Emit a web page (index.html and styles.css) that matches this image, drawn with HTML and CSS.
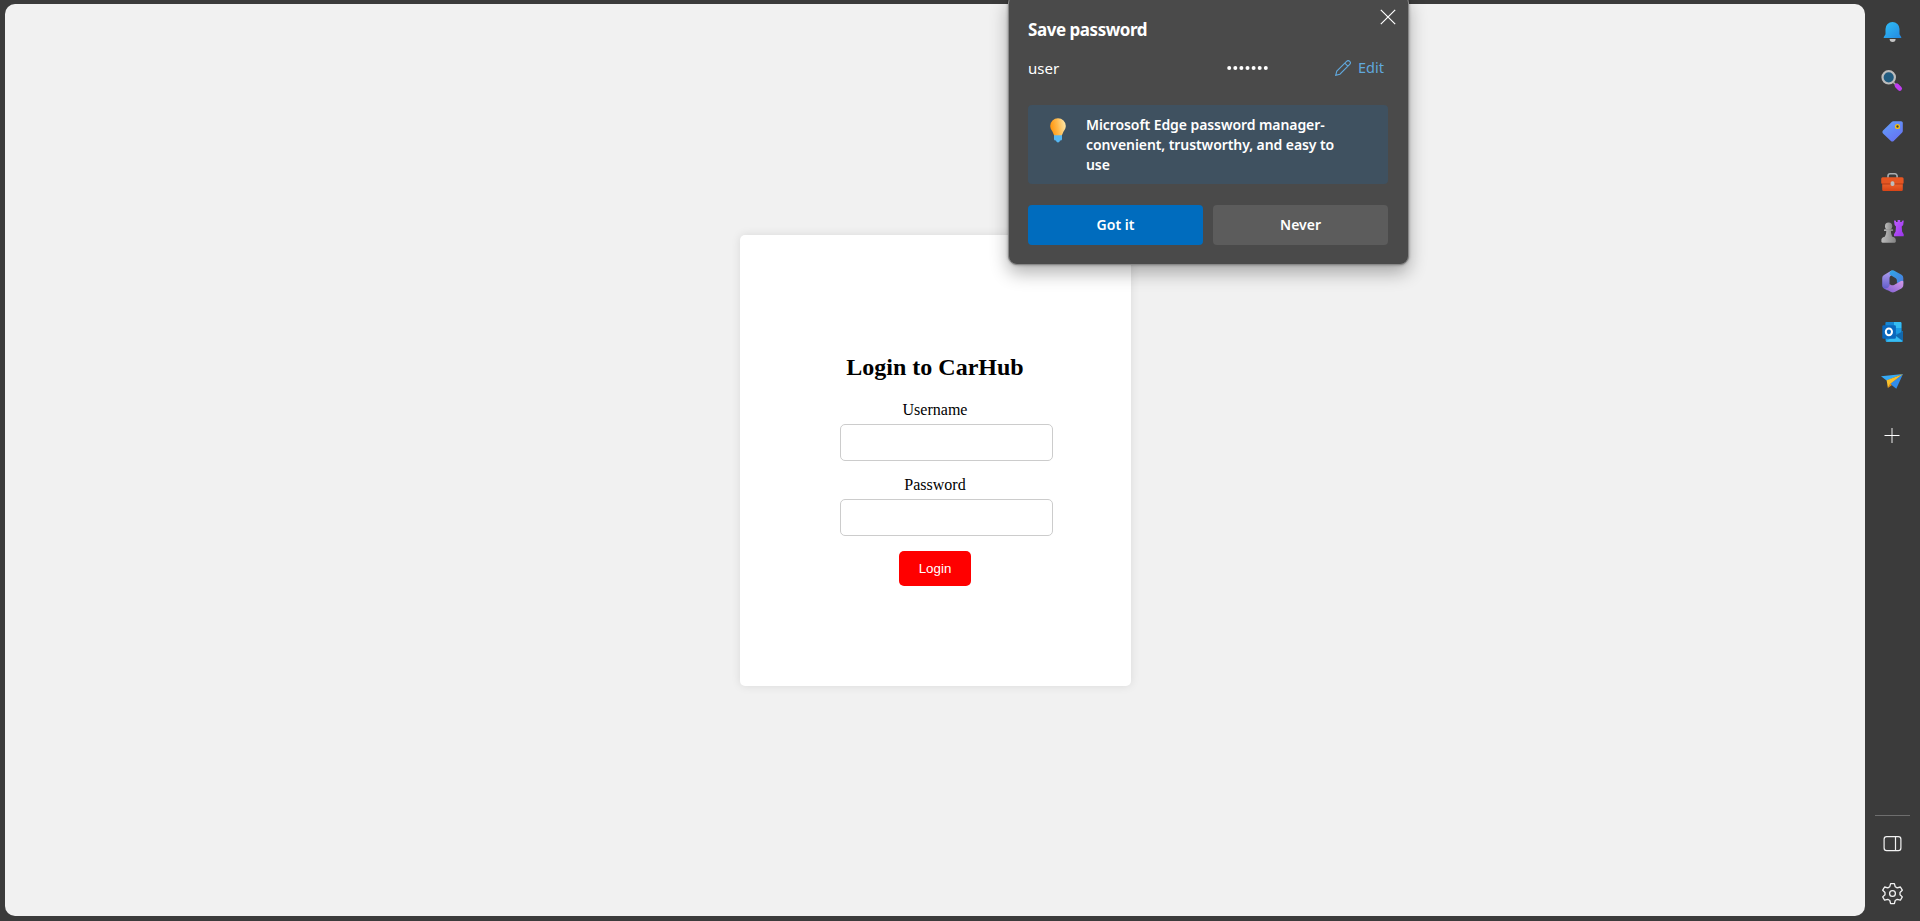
FILE: index.html
```html
<!DOCTYPE html>
<html lang="en">
<head>
<meta charset="utf-8">
<title>CarHub</title>
<link rel="stylesheet" href="styles.css">
</head>
<body>
<div class="browser">
  <main class="page">
    <form class="card">
      <h2 class="card-title">Login to CarHub</h2>
      <label class="label" for="username">Username</label>
      <input class="field" id="username" type="text">
      <label class="label" for="password">Password</label>
      <input class="field" id="password" type="password">
      <button class="login" type="button">Login</button>
    </form>
  </main>

  <nav class="sidebar">
    <svg class="tool" viewBox="0 0 55 50">
      <defs><linearGradient id="bell" x1="0" y1="0" x2="1" y2="1"><stop offset="0" stop-color="#2fc0f8"/><stop offset="1" stop-color="#2588e0"/></linearGradient></defs>
      <path d="M24.6 32h6a3 3 0 0 1-6 0z" fill="#c4c4c4"/>
      <path d="M27.5 15a7 7 0 0 0-7 7v5.3l-1.7 2.6c-.4.6 0 1.1.6 1.1h16.2c.6 0 1-.5.6-1.1l-1.7-2.6V22a7 7 0 0 0-7-7z" fill="url(#bell)"/>
    </svg>
    <svg class="tool" viewBox="0 0 55 50">
      <path d="M28.5 25.500l2.500 2.500" stroke="#aaa" stroke-width="1.6"/>
      <path d="M31.8 28.600l3 3" stroke="#c03df0" stroke-width="4.400" stroke-linecap="round"/>
      <circle cx="23.7" cy="20.3" r="6.2" fill="#225c80" stroke="#bcbcbc" stroke-width="2.2"/>
    </svg>
    <svg class="tool" viewBox="0 0 55 50">
      <defs><linearGradient id="tag" x1="0" y1="0" x2=".7" y2="1"><stop offset="0" stop-color="#62a2fa"/><stop offset="1" stop-color="#6672f2"/></linearGradient></defs>
      <path d="M28.3 14.3h7.8c1 0 1.7.7 1.7 1.7v8c0 .6-.2 1.1-.6 1.5l-8.5 8.4c-.8.8-2 .8-2.8 0L18 26.4c-.8-.8-.8-2 0-2.8l8.7-8.7c.4-.4 1-.6 1.6-.6z" fill="url(#tag)"/>
      <circle cx="32.5" cy="19.5" r="1.9" fill="#403d38" stroke="#f5c116" stroke-width="1.4"/>
    </svg>
    <svg class="tool" viewBox="0 0 55 50">
      <defs><linearGradient id="box" x1="0" y1="0" x2="0" y2="1"><stop offset="0" stop-color="#f26a31"/><stop offset="1" stop-color="#d94416"/></linearGradient></defs>
      <path d="M23 21v-2a2.2 2.2 0 0 1 2.2-2.2h4.7a2.2 2.2 0 0 1 2.2 2.2v2" fill="none" stroke="#a9adb0" stroke-width="1.6"/>
      <path d="M17.2 25h20.6v7.7a1.3 1.3 0 0 1-1.3 1.3h-18a1.3 1.3 0 0 1-1.3-1.3z" fill="url(#box)"/>
      <rect x="16.2" y="20.3" width="22.4" height="6.6" rx="1.5" fill="#e65622"/>
      <path d="M17 27h21" stroke="#a93413" stroke-width=".8"/>
      <rect x="25.6" y="24.3" width="3.8" height="4.6" rx="1.6" fill="#bdbdbd"/>
    </svg>
    <svg class="tool" viewBox="0 0 55 50">
      <defs>
        <linearGradient id="rook" x1="0" y1="0" x2="1" y2="1"><stop offset="0" stop-color="#bf5cff"/><stop offset="1" stop-color="#9a35ea"/></linearGradient>
        <linearGradient id="pawn"><stop offset="0" stop-color="#bcbcbc"/><stop offset="1" stop-color="#848484"/></linearGradient>
      </defs>
      <path d="M29 13.600l2 .1v1.300h1.600V13h2.600v2h1.600v-1.300l2-.1-.6 4.500-1.500 1.300.4 5.200 1.600 2.600v2.100h-9.700v-2.100l1.600-2.600.4-5.200-1.400-1.300z" fill="url(#rook)"/>
      <circle cx="23.600" cy="19.200" r="3.600" fill="url(#pawn)"/>
      <path d="M19.800 22.300h7.600c.6 0 .8.4.8.9s-.3.900-.8.900h-1.500c.1 2.800.8 4.800 1.900 6H19.400c1.100-1.200 1.800-3.200 1.900-6h-1.500c-.6 0-.8-.4-.8-.9s.3-.900.8-.900z" fill="url(#pawn)"/>
      <path d="M18.800 30.100h9.600c1.600.6 2.400 1.700 2.400 3v1.400c0 .7-.4 1.200-1.200 1.200h-12c-.8 0-1.200-.5-1.200-1.200v-1.400c0-1.300.8-2.400 2.400-3z" fill="url(#pawn)"/>
    </svg>
    <svg class="tool" viewBox="0 0 55 50">
      <defs>
        <linearGradient id="m1" x1="0" y1="0" x2="1" y2="1"><stop offset="0" stop-color="#30a8e8"/><stop offset="1" stop-color="#4b77dc"/></linearGradient>
        <linearGradient id="m2" x1="0" y1="1" x2="1" y2="0"><stop offset="0" stop-color="#7a5bd0"/><stop offset="1" stop-color="#d79be8"/></linearGradient>
        <linearGradient id="m3" x1="0" y1="0" x2="0" y2="1"><stop offset="0" stop-color="#b3a0ee"/><stop offset="1" stop-color="#5957c6"/></linearGradient>
      </defs>
      <path d="M26.500 13.500L19 17.900a3.600 3.600 0 0 0-1.800 3.100v7.600c0 1.400.7 2.500 1.900 3.100l2.900 1.500c1.500.4 2.500-.8 2.500-2.500v-9.500c0-1.200.6-2.200 1.600-2.800l2.200-1.400z" fill="url(#m3)"/>
      <path d="M26.200 13.700c1.300-.6 2.500-.4 3.500.2l6.800 3.900a3.600 3.600 0 0 1 1.800 3.100v5.600c0 1.300-1 1.900-2.100 1.300l-4.300-2.400v-1.700c0-1.200-.5-2.100-1.500-2.700l-5.900-3.500c.1-1.700.3-3 1.700-3.800z" fill="url(#m1)"/>
      <path d="M38.300 24.500v3.800c0 1.400-.7 2.500-1.900 3.100l-6.700 3.600c-1.300.6-2.600.5-3.700-.1L18.900 31c3.100 1 5.600-.4 5.600-3.900l1.500.8c1 .5 2 .5 3 0l6.500-3.600c1.200-.7 2.200-.8 2.800.2z" fill="url(#m2)"/>
    </svg>
    <svg class="tool" viewBox="0 0 55 50">
      <rect x="20.4" y="15" width="16" height="14" rx="1" fill="#1687d4"/>
      <path d="M29 15h6.400a1 1 0 0 1 1 1v5H29z" fill="#35bdf3"/>
      <path d="M29 21h7.400v5.500H29z" fill="#1b9be5"/>
      <path d="M20.600 24l8.600 5.200L38 24v9.400c0 .8-.5 1.300-1.300 1.300H22c-.8 0-1.400-.5-1.400-1.300z" fill="#1c9ce6"/>
      <path d="M38 24v9.900l-7.500-5.300z" fill="#1267ab"/>
      <path d="M21 34.200l9-5.500 7.500 5.600-.8.400H22z" fill="#38bdf2"/>
      <rect x="17.300" y="18.300" width="13.600" height="13.400" rx="1.200" fill="#0b68bd"/>
      <ellipse cx="23.900" cy="24.800" rx="3.100" ry="3.400" fill="none" stroke="#fff" stroke-width="2"/>
    </svg>
    <svg class="tool" viewBox="0 0 55 50">
      <path d="M38 17L16 19.200l5.600 4.300z" fill="#37aaf5"/>
      <path d="M38 17l-6.700 14.700-6.300-5z" fill="#2f8cec"/>
      <path d="M38 17l-16.400 6.300 1.300 7.700 2.500-4.200z" fill="#f9c02b"/>
      <path d="M22.900 31l2.300-4.500 1.800 1.400z" fill="#e48b13"/>
    </svg>
    <svg class="tool" viewBox="0 0 55 50">
      <path d="M27 21v15" stroke="#a5a5a5" stroke-width="1.700"/>
      <path d="M19.500 28.500h15" stroke="#fff" stroke-width="1"/>
    </svg>
    <div class="rule"></div>
    <svg class="tool" viewBox="0 0 55 50" fill="none" stroke="#f2f2f2" stroke-width="1.200">
      <rect x="19.100" y="20.600" width="16.800" height="14" rx="2.600"/>
      <path d="M30.500 20.600v14"/>
    </svg>
    <svg class="tool" viewBox="0 0 55 50" fill="none" stroke="#f2f2f2" stroke-width="1.300" stroke-linejoin="round">
      <circle cx="27.500" cy="27.500" r="2.900"/>
      <path d="M25.600 17.600h3.800l.8 3.100 2 1.200 3.200-.9 1.900 3.200-2.300 2.300v2.200l2.300 2.200-1.900 3.300-3.200-.9-2 1.200-.8 3.100h-3.800l-.8-3.100-2-1.200-3.200.9-1.900-3.300 2.300-2.200v-2.200l-2.300-2.300 1.900-3.200 3.200.9 2-1.200z"/>
    </svg>
  </nav>
</div>

<section class="popup">
  <svg class="close" viewBox="0 0 16 16"><path d="M.8.8l14.400 14.400M15.200.8L.8 15.200" stroke="#fff" stroke-width="1.200"/></svg>
  <h1 class="popup-title">Save password</h1>
  <div class="account">
    <span class="user">user</span>
    <svg class="dots" viewBox="0 0 42 4" fill="#fff"><circle cx="2.200" cy="2" r="2"/><circle cx="8.300" cy="2" r="2"/><circle cx="14.400" cy="2" r="2"/><circle cx="20.500" cy="2" r="2"/><circle cx="26.600" cy="2" r="2"/><circle cx="32.700" cy="2" r="2"/><circle cx="38.800" cy="2" r="2"/></svg>
    <a class="edit">
      <svg class="pencil" viewBox="0 0 16 16" fill="none" stroke="#60a8dd" stroke-width="1.100"><path d="M.7 15.300l1.100-4.200L11.600 1.300a2.100 2.100 0 0 1 3.100 3.100L4.900 14.200zM9.800 3.100l3.100 3.100"/></svg>
      <span>Edit</span>
    </a>
  </div>
  <div class="tip">
    <svg class="bulb" viewBox="0 0 16 25">
      <defs><linearGradient id="glow" x1="0" y1=".4" x2="1" y2=".2"><stop offset="0" stop-color="#ff960f"/><stop offset=".45" stop-color="#ffb94b"/><stop offset="1" stop-color="#ffebb0"/></linearGradient></defs>
      <path d="M4 17h8v4.200a1.500 1.500 0 0 1-1.500 1.300H10c-.3 1.300-1 2-2 2s-1.700-.7-2-2h-.5A1.500 1.500 0 0 1 4 21.200z" fill="#55b7f3"/>
      <path d="M8 .3a7.800 7.800 0 0 0-7.800 7.800c0 3.200 2.300 4.700 3.300 7.800.3.900.6 1.300 1.300 1.300h6.400c.7 0 1-.4 1.300-1.300 1-3.100 3.300-4.600 3.300-7.800A7.800 7.800 0 0 0 8 .3z" fill="url(#glow)"/>
    </svg>
    <p class="tip-text">Microsoft Edge password manager-<br>convenient, trustworthy, and easy to<br>use</p>
  </div>
  <div class="actions">
    <button class="action primary" type="button">Got it</button>
    <button class="action" type="button">Never</button>
  </div>
</section>
</body>
</html>
```
FILE: styles.css
```css
* { box-sizing: border-box; }
body {
  margin: 0;
  background: #3b3b3b;
  font-family: "Liberation Serif", serif;
}
.browser {
  display: flex;
  height: 921px;
  overflow: hidden;
}
.page {
  width: 1860px;
  height: 912px;
  margin: 4px 0 0 5px;
  padding: 231px 0 0 735px;
  flex: none;
  background: #f1f1f1;
  border-radius: 10px;
}
.card {
  width: 391px;
  height: 451px;
  padding: 118px 101px 0 100px;
  background: #fff;
  border-radius: 5px;
  box-shadow: 0 0 10px rgba(0, 0, 0, 0.1);
  display: flex;
  flex-direction: column;
  align-items: center;
}
.card-title {
  margin: 0 0 20px;
  font-size: 24px;
  line-height: 28px;
  white-space: nowrap;
}
.label {
  font-size: 16px;
  line-height: 18px;
  margin-bottom: 5px;
}
.field {
  align-self: flex-start;
  width: 213px;
  height: 37px;
  flex: none;
  margin: 0 0 15px;
  border: 1px solid #ccc;
  border-radius: 5px;
  background: #fff;
}
.login {
  width: 72px;
  height: 35px;
  border: 0;
  padding: 0;
  border-radius: 5px;
  background: #f00;
  color: #fff;
  font: 13.333px "Liberation Sans", sans-serif;
}
.sidebar {
  width: 55px;
  padding-top: 7px;
  display: flex;
  flex-direction: column;
}
.tool {
  width: 55px;
  height: 50px;
  flex: none;
}
.rule {
  width: 35px;
  height: 1px;
  flex: none;
  margin: 358px 0 0 10px;
  background: #6e6e6e;
}
.popup {
  position: absolute;
  left: 1008px;
  top: -6px;
  width: 401px;
  height: 271px;
  padding: 24px 20px 0 19px;
  background: #4a4a4a;
  border: 1px solid #888;
  border-radius: 9px;
  box-shadow: 0 8px 18px rgba(0, 0, 0, 0.3), 0 0 3px rgba(0, 0, 0, 0.35);
  color: #fff;
  font-family: "Noto Sans", sans-serif;
}
.close {
  position: absolute;
  right: 12px;
  top: 14px;
  width: 16px;
  height: 16px;
}
.popup-title {
  margin: 0;
  font-size: 17px;
  font-weight: 700;
  line-height: 22px;
  letter-spacing: -0.45px;
}
.account {
  display: flex;
  height: 64px;
  padding-top: 15px;
}
.user {
  width: 199px;
  font-size: 15px;
  line-height: 24px;
}
.dots {
  width: 42px;
  height: 4px;
  margin: 10px 66px 0 0;
}
.edit {
  display: flex;
  gap: 7px;
  color: #60a8dd;
  font-size: 14.5px;
  line-height: 22px;
}
.pencil {
  width: 16px;
  height: 16px;
  margin-top: 4px;
}
.tip {
  display: flex;
  width: 360px;
  height: 79px;
  padding: 11px 0 0 22px;
  background: #3f5160;
  border-radius: 4px;
}
.bulb {
  width: 16px;
  height: 25px;
  margin: 2px 20px 0 0;
}
.tip-text {
  margin: -1px 0 0;
  font-size: 14px;
  font-weight: 600;
  line-height: 20px;
  letter-spacing: -0.08px;
  white-space: nowrap;
}
.actions {
  display: flex;
  gap: 10px;
  margin-top: 21px;
}
.action {
  width: 175px;
  height: 40px;
  border: 0;
  padding: 0 0 2px;
  border-radius: 4px;
  background: #5c5c5c;
  color: #fff;
  font: 600 14px "Noto Sans", sans-serif;
}
.primary { background: #006cbe; }
```
